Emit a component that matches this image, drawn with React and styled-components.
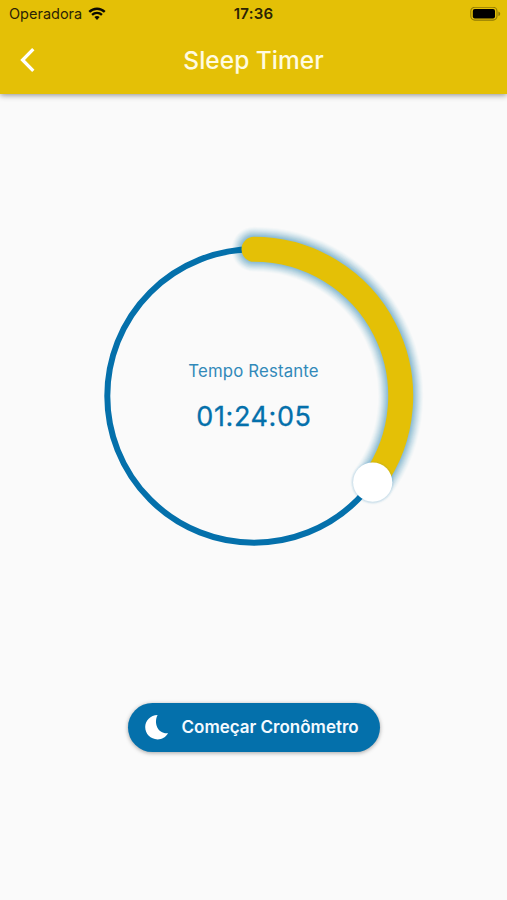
import React from 'react';
import styled, { createGlobalStyle } from 'styled-components';

const yellow = '#e4c006';
const blue = '#0470ab';

const GlobalStyle = createGlobalStyle`
  * {
    box-sizing: border-box;
  }
  body {
    margin: 0;
    background-color: #fafafa;
    font-family: Inter, 'Liberation Sans', sans-serif;
  }
`;

const Screen = styled.div`
  display: flex;
  flex-direction: column;
  width: 100%;
  height: 900px;
  overflow: hidden;
`;

const Header = styled.header`
  height: 94px;
  background-color: ${yellow};
  box-shadow: 0 1px 6px rgba(0, 0, 0, 0.45);
`;

const StatusBar = styled.div`
  display: grid;
  grid-template-columns: 1fr auto 1fr;
  align-items: center;
  height: 27px;
  padding: 0 6px 0 9px;
  color: #2b2305;
`;

const Carrier = styled.div`
  display: flex;
  align-items: center;
  gap: 6px;
  font-size: 14.5px;
`;

const Clock = styled.div`
  padding-right: 3px;
  font-size: 15px;
  font-weight: 600;
  letter-spacing: 0.2px;
`;

const Battery = styled.div`
  display: flex;
  justify-content: flex-end;
`;

const TitleBar = styled.div`
  display: grid;
  grid-template-columns: 56px 1fr 56px;
  align-items: center;
  height: 65px;
`;

const BackButton = styled.button`
  display: flex;
  padding: 1px 0 0 19px;
  border: none;
  background: none;
`;

const Title = styled.h1`
  margin: 0;
  text-align: center;
  color: #fffbe0;
  font-size: 24.5px;
  font-weight: 500;
`;

const Content = styled.main`
  display: flex;
  flex-direction: column;
  align-items: center;
`;

const Dial = styled.div`
  display: grid;
  place-items: center;
  width: 360px;
  height: 360px;
  margin-top: 122px;

  > * {
    grid-area: 1 / 1;
  }
`;

const Remaining = styled.div`
  display: flex;
  flex-direction: column;
  align-items: center;
  gap: 19px;
  padding-top: 2px;
`;

const Label = styled.span`
  color: #3189b9;
  font-size: 16.8px;
  line-height: 20px;
  letter-spacing: 0.15px;
`;

const Time = styled.span`
  padding-left: 1px;
  color: ${blue};
  font-size: 27px;
  line-height: 34px;
  letter-spacing: 0.6px;
  -webkit-text-stroke: 0.3px ${blue};
`;

const StartButton = styled.button`
  display: flex;
  align-items: center;
  gap: 13px;
  width: 252px;
  height: 49px;
  margin-top: 127px;
  padding: 0 0 1px 17px;
  border: none;
  border-radius: 25px;
  background-color: ${blue};
  box-shadow: 0 1px 4px rgba(0, 0, 0, 0.35);
  color: #f4faff;
  font-family: inherit;
  font-size: 17px;
  font-weight: 600;
  white-space: nowrap;
`;

const ARC = 'M180 33.3 A146.7 146.7 0 0 1 298.7 266.2';
const GLOW = [1, 2, 3, 4, 5, 6, 7, 8, 9, 10];

const WifiIcon = () => (
  <svg width="18" height="14" viewBox="0 0 19 15" fill="none" stroke="#0c0a02" strokeWidth="2.5">
    <path d="M1.2 5.3 C5.9 0.7 13.1 0.7 17.8 5.3" />
    <path d="M4.2 8.5 C7.2 5.6 11.8 5.6 14.8 8.5" />
    <path d="M6.7 10.8 C8.4 9.3 10.6 9.3 12.3 10.8 L9.5 13.8 Z" fill="#0c0a02" stroke="none" />
  </svg>
);

const BatteryIcon = () => (
  <svg width="31" height="14" viewBox="0 0 31 14">
    <rect x="0.8" y="0.3" width="26.2" height="12.8" rx="4" fill="none" stroke="#8f7904" strokeWidth="1.1" />
    <rect x="2.8" y="2" width="22.2" height="9.4" rx="2" fill="#000" />
    <path d="M28.4 4.4 C30.8 5.2 30.8 8.2 28.4 9 Z" fill="#8f7904" />
  </svg>
);

const BackIcon = () => (
  <svg width="18" height="26" viewBox="0 0 18 26" fill="none" stroke="#fff" strokeWidth="3.3">
    <path d="M14.3 2.2 L3.6 13 L14.3 23.8" />
  </svg>
);

const MoonIcon = () => (
  <svg width="24" height="26" viewBox="0 0 24 26">
    <path d="M12.6 1 C8.2 9.5 13.2 20.3 23.1 19.2 C20.8 23 17 25.4 12.6 25.4 C5.6 25.4 0.2 20 0.2 13.1 C0.2 6.6 5.4 1.2 12.6 1 Z" fill="#fff" />
  </svg>
);

const TimerRing = () => (
  <svg width="360" height="360" viewBox="0 0 360 360" fill="none">
    <circle cx="180" cy="180" r="146.7" stroke={blue} strokeWidth="6" />
    {GLOW.map((step) => (
      <path
        key={step}
        d={ARC}
        stroke={blue}
        strokeWidth={25 + step * 2}
        strokeOpacity={0.085 - step * 0.006}
        strokeLinecap="round"
      />
    ))}
    <path d={ARC} stroke={yellow} strokeWidth="25" strokeLinecap="round" />
    <circle cx="298.7" cy="266.2" r="21.5" fill={blue} fillOpacity="0.04" />
    <circle cx="298.7" cy="266.2" r="20.5" fill={blue} fillOpacity="0.04" />
    <circle cx="298.7" cy="266.2" r="19.6" fill="#fff" />
  </svg>
);

const App = () => {
  return (
    <Screen>
      <GlobalStyle />
      <Header>
        <StatusBar>
          <Carrier>
            Operadora
            <WifiIcon />
          </Carrier>
          <Clock>17:36</Clock>
          <Battery>
            <BatteryIcon />
          </Battery>
        </StatusBar>
        <TitleBar>
          <BackButton aria-label="Voltar">
            <BackIcon />
          </BackButton>
          <Title>Sleep Timer</Title>
        </TitleBar>
      </Header>
      <Content>
        <Dial>
          <TimerRing />
          <Remaining>
            <Label>Tempo Restante</Label>
            <Time>01:24:05</Time>
          </Remaining>
        </Dial>
        <StartButton>
          <MoonIcon />
          Começar Cronômetro
        </StartButton>
      </Content>
    </Screen>
  );
};

export default App;
